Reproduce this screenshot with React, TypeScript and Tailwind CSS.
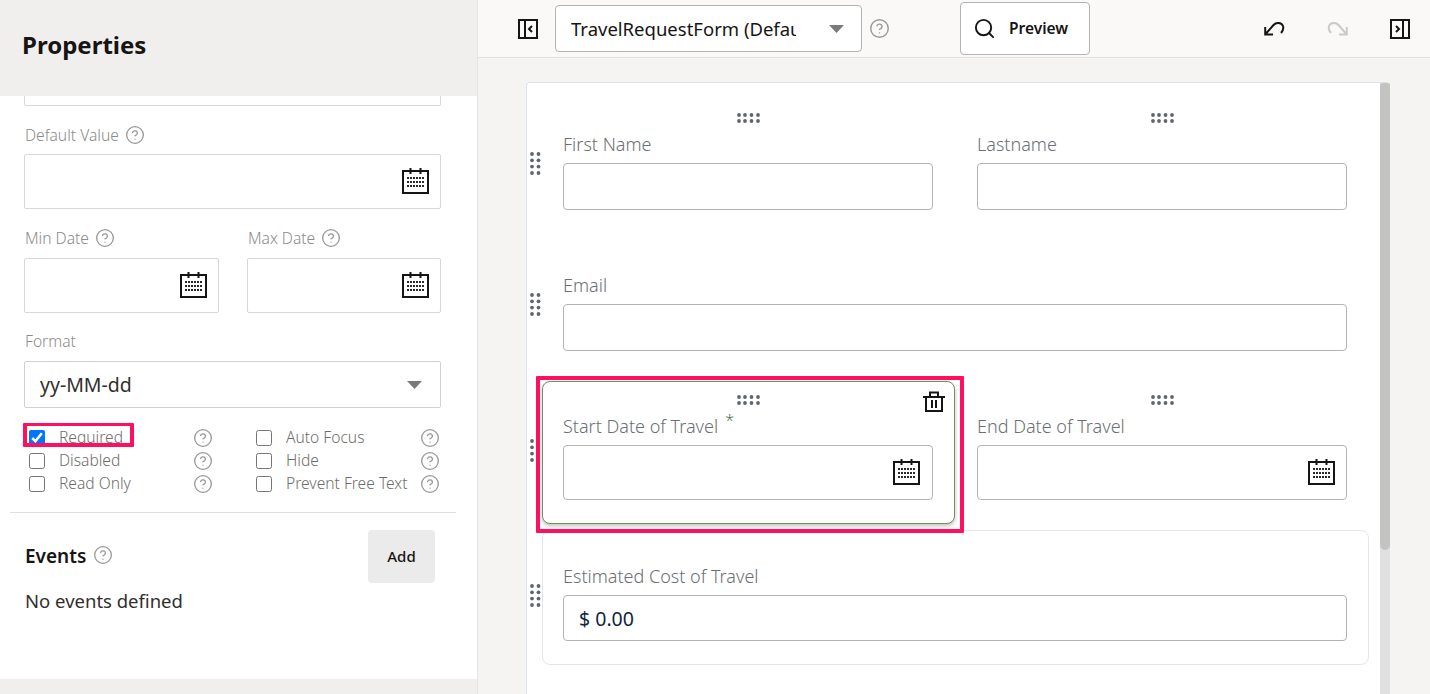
import { CircleHelp, Search } from "lucide-react";

const CalendarIcon = () => (
  <svg width="27" height="27" viewBox="0 0 27 27" className="shrink-0">
    <rect x="1" y="3" width="25" height="22" fill="none" stroke="#161513" strokeWidth="2" />
    <path d="M8.5 0v6M18.5 0v6" stroke="#161513" strokeWidth="2" />
    {[9, 13, 17].map((y) =>
      [5, 8, 11, 14, 17, 20].map((x) => (
        <rect key={`${x}-${y}`} x={x} y={y} width="2" height="2" fill="#2a2927" />
      ))
    )}
  </svg>
);

const Help = ({ size = 20 }: { size?: number }) => (
  <CircleHelp size={size} strokeWidth={1.6} className="shrink-0 text-[#9a9997]" />
);

const Caret = () => (
  <svg width="15" height="8" viewBox="0 0 15 8" className="shrink-0">
    <path d="M0 0h15L7.5 8z" fill="#7b7a78" />
  </svg>
);

const PanelIcon = ({ flip = false }: { flip?: boolean }) => (
  <svg width="20" height="20" viewBox="0 0 20 20" className={flip ? "-scale-x-100" : ""}>
    <rect x="1" y="1" width="18" height="18" fill="none" stroke="#161513" strokeWidth="2" />
    <path d="M7 1v18" stroke="#161513" strokeWidth="2" />
    <path d="M14 7l-3 3 3 3" fill="none" stroke="#161513" strokeWidth="2" />
  </svg>
);

const UndoIcon = ({ flip = false, color = "#161513" }: { flip?: boolean; color?: string }) => (
  <svg width="21" height="15" viewBox="0 0 21 15" className={flip ? "-scale-x-100" : ""}>
    <path
      d="M1.2 6v7.5H9M1.2 13.5L9.5 4C12 1 17.5 1.2 19 5c.8 2.5-.4 5.2-2 7"
      fill="none"
      stroke={color}
      strokeWidth="2"
    />
  </svg>
);

const TrashIcon = () => (
  <svg width="22" height="21" viewBox="0 0 22 21">
    <path
      d="M0 6h22M7 6V1.5h8V6M3 6v14h16V6M9 9v8M13 9v8"
      fill="none"
      stroke="#161513"
      strokeWidth="2"
    />
  </svg>
);

const GripH = () => (
  <svg width="23" height="10" viewBox="0 0 23 10" className="mx-auto block">
    {[2, 8, 14.5, 21].map((x) =>
      [2, 8].map((y) => <circle key={`${x}-${y}`} cx={x} cy={y} r="1.9" fill="#5f6670" />)
    )}
  </svg>
);

const GripV = ({ single = false }: { single?: boolean }) => (
  <svg width="11" height="23" viewBox="0 0 11 23" className="block">
    {(single ? [2] : [2, 8.5]).map((x) =>
      [2, 8.3, 14.6, 21].map((y) => <circle key={`${x}-${y}`} cx={x} cy={y} r="1.9" fill="#5f6670" />)
    )}
  </svg>
);

const PanelInput = ({ className = "" }: { className?: string }) => (
  <div
    className={`flex h-[55px] items-center justify-end rounded-[2px] border border-[#d9d7d3] pr-[11px] ${className}`}
  >
    <CalendarIcon />
  </div>
);

const PanelLabel = ({ children, help = true }: { children: React.ReactNode; help?: boolean }) => (
  <div className="flex h-[22px] items-center gap-[6px] pl-px text-[15.6px] font-light text-[#8c8b89]">
    <span className="translate-y-px">{children}</span>
    {help && <Help />}
  </div>
);

const CheckRow = ({ label, checked = false }: { label: string; checked?: boolean }) => (
  <div className="flex h-[23px] items-center">
    <input type="checkbox" defaultChecked={checked} className="h-4 w-4 shrink-0 accent-[#0075ff]" />
    <span className="ml-[14px] text-[15.6px] font-light whitespace-nowrap text-[#6f6e6c]">{label}</span>
    <span className="ml-auto">
      <Help />
    </span>
  </div>
);

const FormCell = ({
  label,
  star = false,
  calendar = false,
  selected = false,
}: {
  label: string;
  star?: boolean;
  calendar?: boolean;
  selected?: boolean;
}) => (
  <div
    className={`relative flex flex-col rounded-lg border pt-[13px] pr-[21px] pb-[23px] pl-[20px] ${
      selected ? "border-[#6f9160] bg-white shadow-[0_2px_4px_rgba(0,0,0,0.25)]" : "border-transparent"
    }`}
  >
    <GripH />
    <div className="mt-[9px] flex h-[24px] items-center text-[18px] font-light text-[#6b6f75]">
      {label}
      {star && <span className="ml-[7px] -translate-y-[6px] text-[16px] text-[#55704a]">*</span>}
    </div>
    <div
      className={`mt-[7px] flex items-center justify-end rounded-[4px] border border-[#b4b3b1] ${
        calendar ? "h-[55px]" : "h-[47px]"
      } ${selected ? "pr-[12px]" : "pr-[11px]"}`}
    >
      {calendar && <CalendarIcon />}
    </div>
    {selected && (
      <span className="absolute top-[9px] right-[9px]">
        <TrashIcon />
      </span>
    )}
  </div>
);

export default function App() {
  return (
    <div className="flex h-screen overflow-hidden bg-white font-['Noto_Sans',sans-serif] text-[#161513]">
      {/* properties panel */}
      <aside className="flex w-[477px] shrink-0 flex-col bg-white">
        <div className="flex h-24 items-center bg-[#f1efed] pb-[6px] pl-[22px] text-[24px] font-bold">
          Properties
        </div>
        <div className="flex-1 px-[24px]">
          <div className="h-[10px] w-[417px] rounded-b-[2px] border-x border-b border-[#d9d7d3]" />
          <div className="mt-[18px] w-[417px]">
            <PanelLabel>Default Value</PanelLabel>
            <PanelInput className="mt-[8px]" />
          </div>
          <div className="mt-[18px] grid w-[417px] grid-cols-[195px_194px] gap-x-[28px]">
            <div>
              <PanelLabel>Min Date</PanelLabel>
              <PanelInput className="mt-[9px]" />
            </div>
            <div>
              <PanelLabel>Max Date</PanelLabel>
              <PanelInput className="mt-[9px]" />
            </div>
          </div>
          <div className="mt-[17px] w-[417px]">
            <PanelLabel help={false}>Format</PanelLabel>
            <div className="mt-[9px] flex h-[47px] items-center justify-between rounded-[2px] border border-[#d3d1ce] pr-[18px] pl-[15px] text-[19.5px] text-[#312f2d]">
              <span>yy-MM-dd</span>
              <Caret />
            </div>
          </div>
          <div className="relative mt-[18px] ml-[5px] grid w-[411px] grid-cols-[184px_184px] gap-x-[43px]">
            <div>
              <CheckRow label="Required" checked />
              <CheckRow label="Disabled" />
              <CheckRow label="Read Only" />
            </div>
            <div>
              <CheckRow label="Auto Focus" />
              <CheckRow label="Hide" />
              <CheckRow label="Prevent Free Text" />
            </div>
            <div className="absolute top-[-3px] left-[-6px] h-[24px] w-[111px] rounded-[1px] border-x-[4px] border-t-[3px] border-b-[4px] border-[#ff0f5f]" />
          </div>
        </div>
        <div className="mx-[10px] h-px w-[446px] bg-[#e2dfda]" />
        <div className="flex-none px-[25px]">
          <div className="mt-[17px] flex items-center">
            <span className="text-[19px] font-semibold">Events</span>
            <span className="ml-[7px] -translate-y-[2px]">
              <Help />
            </span>
            <button className="mr-[17px] ml-auto h-[53px] w-[67px] rounded-[4px] bg-[#ebebeb] text-[15px] font-medium">
              Add
            </button>
          </div>
          <div className="mt-[6px] h-[24px] text-[18.5px] leading-[24px] text-[#312f2d]">No events defined</div>
        </div>
        <div className="mt-[66px] h-[15px] bg-[#f1efed]" />
      </aside>

      {/* designer */}
      <main className="flex min-w-0 flex-1 flex-col border-l border-[#e6e4e1] bg-[#f5f4f2]">
        <header className="flex h-[58px] shrink-0 items-center border-b border-[#e4e1dd] bg-[#fbf9f8] pr-[20px] pl-[40px]">
          <PanelIcon />
          <div className="ml-[17px] flex h-[47px] w-[307px] items-center justify-between rounded-[4px] border border-[#b4b3b1] bg-white pr-[17px] pl-[15px]">
            <span className="w-[225px] overflow-hidden text-[18.5px] whitespace-nowrap">TravelRequestForm (Default)</span>
            <Caret />
          </div>
          <span className="ml-[7px]">
            <Help size={21} />
          </span>
          <button className="ml-[70px] flex h-[53px] w-[130px] items-center rounded-[4px] border border-[#b4b3b1] bg-white pl-[12px]">
            <Search size={23} strokeWidth={2} className="text-[#161513]" />
            <span className="ml-[13px] text-[15.5px] font-semibold">Preview</span>
          </button>
          <div className="ml-auto flex items-center">
            <UndoIcon />
            <span className="ml-[42px]">
              <UndoIcon flip color="#cbcac8" />
            </span>
            <span className="ml-[42px]">
              <PanelIcon flip />
            </span>
          </div>
        </header>
        <div className="min-h-0 flex-1 pt-[24px] pl-[48px]">
          <div className="flex h-[700px] w-[864px] rounded-t-[4px] border-t border-l border-[#dce3ea] bg-white">
            <div className="min-w-0 flex-1 pt-[16px] pl-[15px]">
              <div className="flex w-[827px] flex-col gap-[6px]">
                <div className="relative grid grid-cols-[413px_413px] gap-x-px">
                  <span className="absolute top-[53px] left-[-12px]">
                    <GripV />
                  </span>
                  <FormCell label="First Name" />
                  <FormCell label="Lastname" />
                </div>
                <div className="relative">
                  <span className="absolute top-[53px] left-[-12px]">
                    <GripV />
                  </span>
                  <div className="flex flex-col pt-[33px] pr-[22px] pb-[24px] pl-[21px]">
                    <div className="flex h-[24px] items-center text-[18px] font-light text-[#6b6f75]">Email</div>
                    <div className="mt-[7px] h-[47px] rounded-[4px] border border-[#b4b3b1]" />
                  </div>
                </div>
                <div className="relative grid grid-cols-[413px_413px] gap-x-px">
                  <span className="absolute top-[58px] left-[-12px]">
                    <GripV single />
                  </span>
                  <FormCell label="Start Date of Travel" star calendar selected />
                  <FormCell label="End Date of Travel" calendar />
                  <div className="pointer-events-none absolute top-[-5px] left-[-6px] z-10 h-[157px] w-[428px] rounded-[1px] border-[4px] border-[#ff0f5f]" />
                </div>
                <div className="relative">
                  <span className="absolute top-[54px] left-[-12px]">
                    <GripV />
                  </span>
                  <div className="flex h-[135px] flex-col rounded-lg border border-[#e6e6e6] pt-[33px] pr-[21px] pl-[20px]">
                    <div className="flex h-[24px] items-center text-[18px] font-light text-[#6b6f75]">
                      Estimated Cost of Travel
                    </div>
                    <div className="mt-[7px] flex h-[46px] items-center rounded-[4px] border border-[#b4b3b1] pt-px pl-[15px] text-[19.5px] text-[#10243e]">
                      $ 0.00
                    </div>
                  </div>
                </div>
              </div>
            </div>
            <div className="w-[10px] shrink-0 bg-[#e0e0e0]">
              <div className="h-[467px] rounded-t-[3px] rounded-b-[5px] bg-[#c3c3c2]" />
            </div>
          </div>
        </div>
      </main>
    </div>
  );
}
